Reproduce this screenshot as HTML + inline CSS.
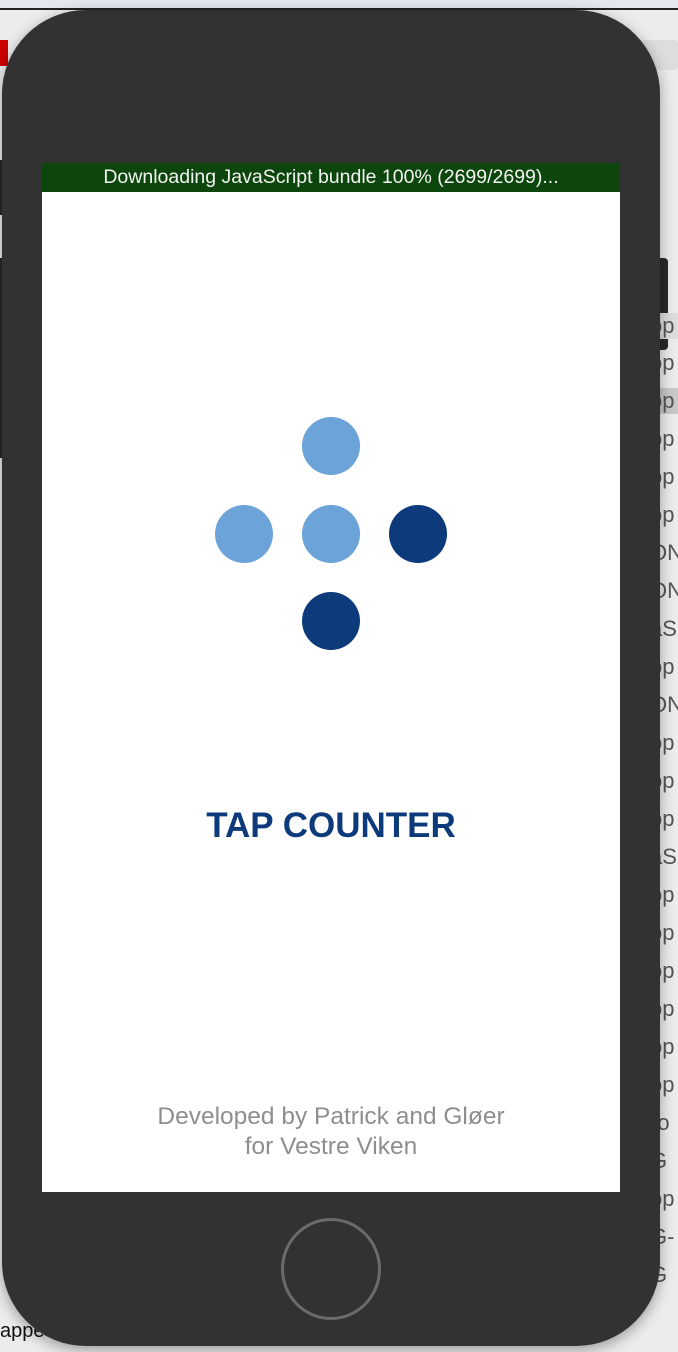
<!DOCTYPE html>
<html><head><meta charset="utf-8"><style>
html,body{margin:0;padding:0}
body{width:678px;height:1352px;position:relative;overflow:hidden;background:#ececec;font-family:"Liberation Sans",sans-serif}
.abs{position:absolute}
.row{position:absolute;left:650px;width:28px;height:26px;font-size:22px;color:#555;line-height:26px;overflow:hidden}
.dot{position:absolute;width:58px;height:58px;border-radius:50%}
.l{background:#6ca4d9}.d{background:#0c3a7b}
</style></head><body>
<div class="abs" style="left:0;top:0;width:678px;height:8px;background:#e4e8ee;border-bottom:2px solid #222"></div>
<div class="abs" style="left:0;top:40px;width:8px;height:26px;background:#c00"></div>
<div class="abs" style="left:640px;top:40px;width:38px;height:30px;background:#ddd;border-radius:4px"></div>
<div class="abs" style="left:640px;top:258px;width:28px;height:92px;background:#2a2a2a;border-radius:4px"></div>
<div class="abs" style="left:0;top:160px;width:8px;height:55px;background:#2a2a2a"></div>
<div class="abs" style="left:0;top:258px;width:8px;height:200px;background:#2a2a2a"></div>
<div class="abs" style="left:0;top:1320px;font-size:20px;color:#111">appe</div>
<div class="row" style="top:313px;background:#ddd">op</div>
<div class="row" style="top:350px">op</div>
<div class="row" style="top:388px;background:#c8c8c8">op</div>
<div class="row" style="top:426px">op</div>
<div class="row" style="top:464px">op</div>
<div class="row" style="top:502px">op</div>
<div class="row" style="top:540px">ON</div>
<div class="row" style="top:578px">ON</div>
<div class="row" style="top:616px">aS</div>
<div class="row" style="top:654px">op</div>
<div class="row" style="top:692px">ON</div>
<div class="row" style="top:730px">op</div>
<div class="row" style="top:768px">op</div>
<div class="row" style="top:806px">op</div>
<div class="row" style="top:844px">aS</div>
<div class="row" style="top:882px">op</div>
<div class="row" style="top:920px">op</div>
<div class="row" style="top:958px">op</div>
<div class="row" style="top:996px">op</div>
<div class="row" style="top:1034px">op</div>
<div class="row" style="top:1072px">op</div>
<div class="row" style="top:1110px">ro</div>
<div class="row" style="top:1148px">G</div>
<div class="row" style="top:1186px">op</div>
<div class="row" style="top:1224px">G-</div>
<div class="row" style="top:1262px">G</div>
<div class="abs" style="left:2px;top:10px;width:658px;height:1336px;background:#323232;border-radius:84px;box-shadow:0 4px 14px rgba(0,0,0,.35)"></div>
<div class="abs" style="left:42px;top:163px;width:578px;height:1029px;background:#fff"></div>
<div class="abs" style="left:42px;top:163px;width:578px;height:29px;background:#0d460c;color:#f2f2f2;font-size:19.5px;line-height:29px;text-align:center;white-space:nowrap">Downloading JavaScript bundle 100% (2699/2699)...</div>
<div class="dot l" style="left:302px;top:417px"></div>
<div class="dot l" style="left:215px;top:505px"></div>
<div class="dot l" style="left:302px;top:505px"></div>
<div class="dot d" style="left:389px;top:505px"></div>
<div class="dot d" style="left:302px;top:592px"></div>
<div class="abs" style="left:42px;width:578px;top:804px;text-align:center;font-size:35px;font-weight:bold;color:#0c3a7b;line-height:44px">TAP COUNTER</div>
<div class="abs" style="left:42px;width:578px;top:1102px;text-align:center;font-size:24.5px;color:#8e8e8e;line-height:30px;white-space:nowrap">Developed by Patrick and Gløer<br>for Vestre Viken</div>
<div class="abs" style="left:281px;top:1218px;width:94px;height:96px;border:3px solid #6b6b6b;border-radius:50%"></div>
</body></html>
